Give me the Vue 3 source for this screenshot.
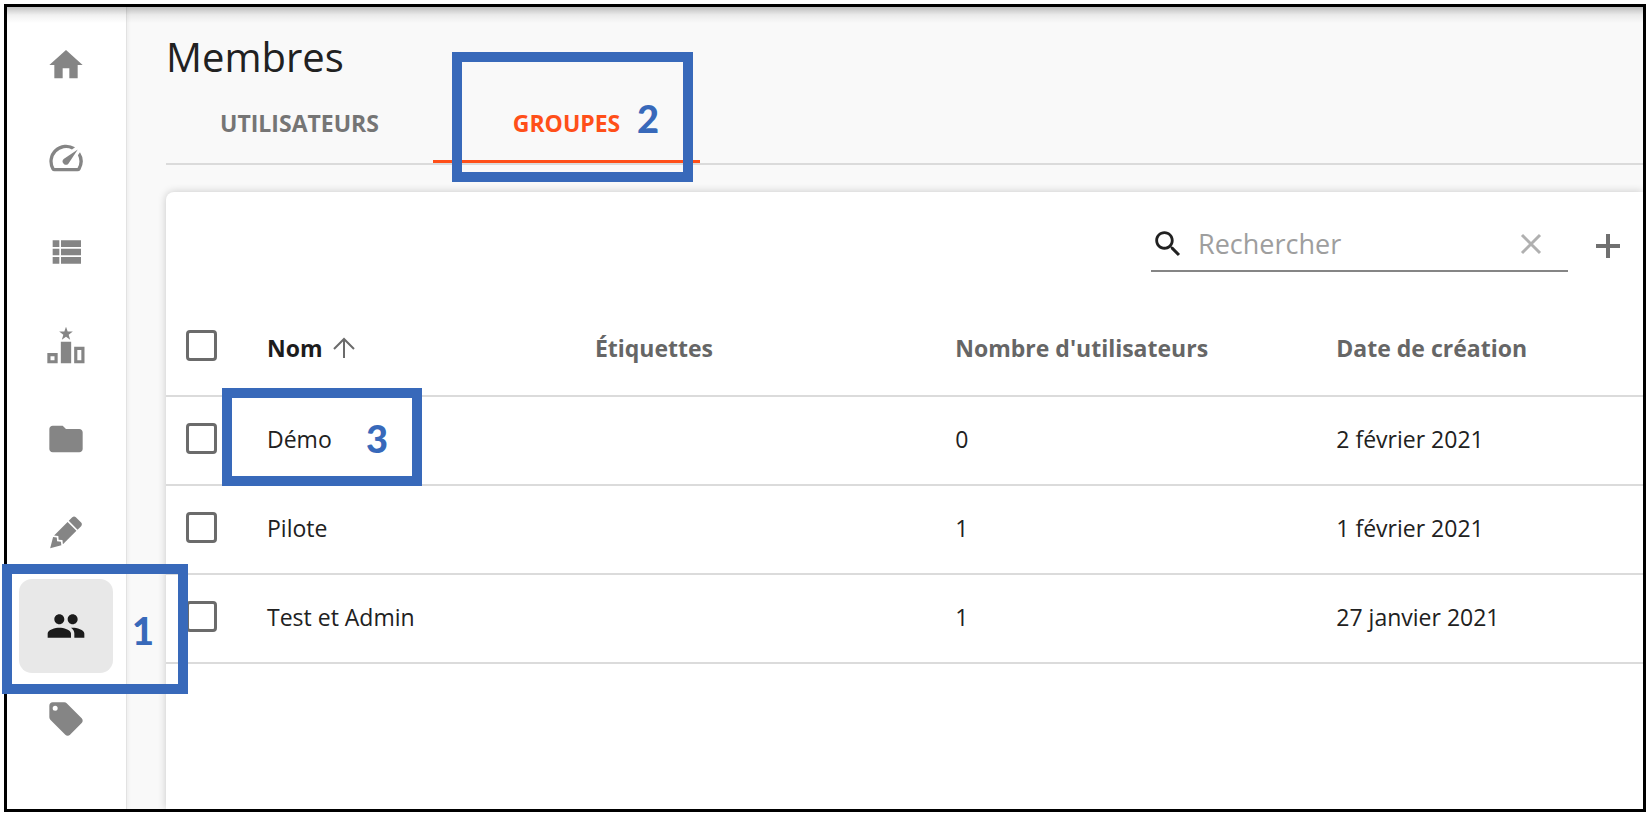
<script setup>
import { computed, ref } from 'vue'

const navItems = [
  { id: 'home', label: 'Accueil', path: 'M10 20v-6h4v6h5v-8h3L12 3 2 12h3v8z' },
  { id: 'dashboard', label: 'Tableau de bord', path: 'M20.38 8.57l-1.23 1.85a8 8 0 0 1-.22 7.58H5.07A8 8 0 0 1 15.58 6.85l1.85-1.23A10 10 0 0 0 3.35 19a2 2 0 0 0 1.72 1h13.85a2 2 0 0 0 1.74-1 10 10 0 0 0-.27-10.44zm-9.79 6.84a2 2 0 0 0 2.83 0l5.66-8.49-8.49 5.66a2 2 0 0 0 0 2.83z' },
  { id: 'list', label: 'Listes', path: 'M4 14h4v-4H4v4zm0 5h4v-4H4v4zM4 9h4V5H4v4zm5 5h12v-4H9v4zm0 5h12v-4H9v4zM9 5v4h12V5H9z' },
  { id: 'ranking', label: 'Classement', path: 'M12 1l1 2.9h3.1l-2.5 1.9.9 3L12 7 9.5 8.8l.9-3-2.5-1.9H11zM8.9 10h6.2v13H8.9zM.8 16.8H7V23H.8zM2.7 18.7v2.4h2.4v-2.4zM16.9 13.1h6.2V23h-6.2zM18.8 15v6.1h2.4V15z' },
  { id: 'files', label: 'Dossiers', path: 'M10 4H4c-1.1 0-1.99.9-1.99 2L2 18c0 1.1.9 2 2 2h16c1.1 0 2-.9 2-2V8c0-1.1-.9-2-2-2h-8l-2-2z' },
  { id: 'edit', label: 'Édition', path: 'M16.84 2.73c-.39 0-.77.15-1.07.44l-2.12 2.12 5.3 5.31 2.12-2.1c.6-.61.6-1.56 0-2.14L17.9 3.17c-.3-.29-.68-.44-1.06-.44M12.94 6l-8.1 8.11 2.56.28.18 2.29 2.28.17.29 2.56 8.1-8.11M4.25 15.04L2.5 21.73l6.7-1.79-.24-2.16-2.31-.17-.18-2.32' },
  { id: 'members', label: 'Membres', path: 'M16 11c1.66 0 2.99-1.34 2.99-3S17.66 5 16 5s-3 1.34-3 3 1.34 3 3 3zm-8 0c1.66 0 2.99-1.34 2.99-3S9.66 5 8 5 5 6.34 5 8s1.34 3 3 3zm0 2c-2.33 0-7 1.17-7 3.5V19h14v-2.5c0-2.33-4.67-3.5-7-3.5zm8 0c-.29 0-.62.02-.97.05 1.16.84 1.97 1.97 1.97 3.45V19h6v-2.5c0-2.33-4.67-3.5-7-3.5z' },
  { id: 'tags', label: 'Étiquettes', path: 'M5.5 7A1.5 1.5 0 0 1 4 5.5 1.5 1.5 0 0 1 5.5 4 1.5 1.5 0 0 1 7 5.5 1.5 1.5 0 0 1 5.5 7m15.91 4.58l-9-9C12.05 2.22 11.55 2 11 2H4c-1.11 0-2 .89-2 2v7c0 .55.22 1.05.59 1.41l8.99 9c.37.36.87.59 1.42.59s1.05-.23 1.41-.59l7-7c.37-.36.59-.86.59-1.41 0-.56-.23-1.06-.59-1.42z' }
]
const activeNav = ref('members')

const activeTab = ref('groups') // 'users' | 'groups'

const groups = [
  { id: 1, name: 'Démo', tags: '', users: 0, date: '2 février 2021' },
  { id: 2, name: 'Pilote', tags: '', users: 1, date: '1 février 2021' },
  { id: 3, name: 'Test et Admin', tags: '', users: 1, date: '27 janvier 2021' }
]

const search = ref('')
const ascending = ref(true)
const selected = ref([])

const rows = computed(() => {
  const list = groups.filter(g => g.name.toLowerCase().includes(search.value.toLowerCase()))
  list.sort((a, b) => a.name.localeCompare(b.name))
  return ascending.value ? list : list.reverse()
})

const toggleAll = (e) => {
  selected.value = e.target.checked ? groups.map(g => g.id) : []
}
</script>

<template>
  <div class="page">
    <div class="frame">
      <nav class="sidebar">
        <button
          v-for="item in navItems"
          :key="item.id"
          class="nav-item"
          :class="{ active: activeNav === item.id }"
          :aria-label="item.label"
          @click="activeNav = item.id"
        >
          <svg viewBox="0 0 24 24" fill-rule="evenodd"><path :d="item.path" /></svg>
        </button>
      </nav>

      <main class="content">
        <h1>Membres</h1>

        <div class="tabs">
          <button class="tab" :class="{ active: activeTab === 'users' }" @click="activeTab = 'users'">UTILISATEURS</button>
          <button class="tab" :class="{ active: activeTab === 'groups' }" @click="activeTab = 'groups'">GROUPES</button>
        </div>

        <section class="card">
          <div class="toolbar">
            <div class="search">
              <svg class="search-icon" viewBox="0 0 24 24"><path d="M15.5 14h-.79l-.28-.27C15.41 12.59 16 11.11 16 9.5 16 5.91 13.09 3 9.5 3S3 5.91 3 9.5 5.91 16 9.5 16c1.61 0 3.09-.59 4.23-1.57l.27.28v.79l5 4.99L20.49 19l-4.99-5zm-6 0C7.01 14 5 11.99 5 9.5S7.01 5 9.5 5 14 7.01 14 9.5 11.99 14 9.5 14z" /></svg>
              <input v-model="search" type="text" placeholder="Rechercher" aria-label="Rechercher" />
              <button class="clear" aria-label="Effacer" @click="search = ''">
                <svg viewBox="0 0 24 24"><path d="M3 3l18 18M21 3L3 21" /></svg>
              </button>
            </div>
            <button class="add" aria-label="Ajouter un groupe">
              <svg viewBox="0 0 24 24"><path d="M12 0v24M0 12h24" /></svg>
            </button>
          </div>

          <table>
            <colgroup>
              <col class="col-check" />
              <col class="col-name" />
              <col class="col-tags" />
              <col class="col-users" />
              <col />
            </colgroup>
            <thead>
              <tr>
                <th class="check"><input type="checkbox" aria-label="Tout sélectionner" :checked="selected.length === groups.length" @change="toggleAll" /></th>
                <th>
                  <button class="sort" @click="ascending = !ascending">
                    Nom
                    <svg :class="{ down: !ascending }" viewBox="0 0 22 22"><path d="M11 21V2M1 12L11 2l10 10" /></svg>
                  </button>
                </th>
                <th>Étiquettes</th>
                <th>Nombre d'utilisateurs</th>
                <th>Date de création</th>
              </tr>
            </thead>
            <tbody>
              <tr v-for="g in rows" :key="g.id">
                <td class="check"><input v-model="selected" type="checkbox" :value="g.id" :aria-label="g.name" /></td>
                <td>{{ g.name }}</td>
                <td>{{ g.tags }}</td>
                <td>{{ g.users }}</td>
                <td>{{ g.date }}</td>
              </tr>
            </tbody>
          </table>
        </section>
      </main>
    </div>

    <!-- Repères des étapes -->
    <div class="step step-nav">1</div>
    <div class="step step-tab">2</div>
    <div class="step step-row">3</div>
  </div>
</template>

<style>
body { margin: 0; background: #fff; }
</style>

<style scoped>
.page { position: relative; display: flex; box-sizing: border-box; min-height: 100vh; padding: 4px 6px 6px 4px; background: #fff; font-family: "Open Sans", "Noto Sans", sans-serif; color: #212121; }
.page * { box-sizing: border-box; }
.frame { position: relative; flex: 1; min-width: 0; display: flex; border: 3px solid #000; background: #f9f9f9; }
.frame::before { content: ''; position: absolute; inset: 0 0 auto; height: 16px; background: linear-gradient(rgba(0,0,0,0.24), rgba(0,0,0,0.06) 50%, transparent); pointer-events: none; }
button { padding: 0; border: 0; background: transparent; font-family: inherit; color: inherit; cursor: pointer; }
svg { display: block; fill: currentColor; }

.sidebar { width: 120px; flex-shrink: 0; display: grid; grid-auto-rows: 1fr; padding: 11px 13px 43px 12px; background: #fff; border-right: 1px solid #e2e2e2; box-shadow: 1px 0 4px rgba(0,0,0,0.06); }
.nav-item { display: grid; place-items: center; border-radius: 13px; color: #858585; }
.nav-item svg { width: 40px; height: 40px; }
.nav-item.active { background: #e8e8e8; color: #1c1c1c; }

.content { flex: 1; min-width: 0; display: flex; flex-direction: column; padding: 24px 0 0 39px; }
h1 { margin: 0; font-size: 40px; line-height: 52px; font-weight: 400; }
.tabs { display: flex; border-bottom: 2px solid #dbdbdb; }
.tab { width: 267px; height: 80px; padding-top: 2px; border-bottom: 3px solid transparent; font-size: 23px; line-height: 32px; font-weight: 700; color: #757575; }
.tab.active { color: #ff4f19; border-bottom-color: #ff4f19; }

.card { flex: 1; margin-top: 27px; background: #fff; border-radius: 8px 0 0 0; box-shadow: 0 0 8px rgba(0,0,0,0.2); clip-path: inset(-8px 0 0 -8px); }
.toolbar { display: flex; justify-content: flex-end; align-items: flex-end; gap: 28px; height: 80px; padding-right: 23px; }
.search { display: flex; align-items: center; width: 417px; height: 54px; padding-right: 21px; border-bottom: 2px solid #858585; }
.search-icon { width: 34px; height: 34px; flex-shrink: 0; }
.search input { flex: 1; min-width: 0; padding: 0 0 0 13px; border: 0; outline: none; background: transparent; font-family: inherit; font-size: 27px; line-height: 36px; color: #212121; }
.search input::placeholder { color: #9e9e9e; opacity: 1; }
.clear { padding: 4px; color: #b0b0b0; }
.add { padding-bottom: 14px; color: #707070; }
.clear svg, .add svg { width: 24px; height: 24px; fill: none; stroke: currentColor; stroke-width: 3; }
.add svg { stroke-width: 4; }

table { width: 100%; table-layout: fixed; border-collapse: separate; border-spacing: 0; font-size: 23px; line-height: 32px; }
.col-check { width: 101px; }
.col-name { width: 22.2%; }
.col-tags { width: 24.4%; }
.col-users { width: 25.8%; }
th, td { height: 89px; padding: 0 0 4px; text-align: left; border-bottom: 2px solid #dbdbdb; }
th { height: 125px; padding-top: 32px; font-weight: 700; color: #666; }
.check { padding-left: 20px; padding-bottom: 4px; }
th.check { padding-top: 28px; }
.check input { appearance: none; display: block; width: 31px; height: 31px; margin: 0; border: 3px solid #6b6b6b; border-radius: 4px; background: #fff; cursor: pointer; }
.check input:checked { background: #ff4f19; }
.sort { display: flex; align-items: center; gap: 10px; font-size: 23px; line-height: 32px; font-weight: 700; color: #1c1c1c; }
.sort svg { width: 22px; height: 22px; fill: none; stroke: #6b6b6b; stroke-width: 2; }
.sort svg.down { transform: rotate(180deg); }

.step { position: absolute; display: flex; align-items: center; justify-content: flex-end; padding: 2px 24px 0 0; border: 10px solid #3869ba; font-family: Lato, sans-serif; font-size: 38px; line-height: 44px; font-weight: 900; color: #3869ba; pointer-events: none; }
.step-nav { left: 2px; top: 564px; width: 186px; height: 130px; }
.step-tab { left: 452px; top: 52px; width: 241px; height: 130px; }
.step-row { left: 222px; top: 388px; width: 200px; height: 98px; }
</style>
